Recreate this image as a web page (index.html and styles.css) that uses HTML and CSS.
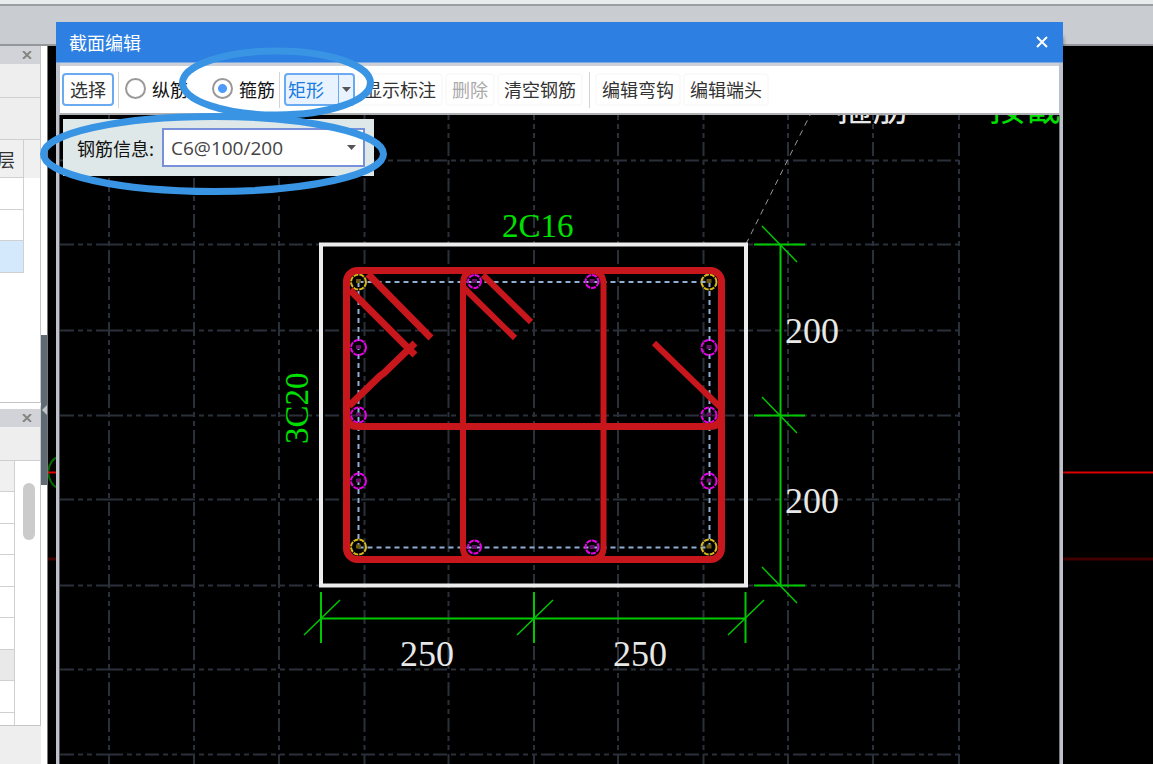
FILE: index.html
```html
<!DOCTYPE html>
<html lang="zh-CN">
<head>
<meta charset="utf-8">
<title>截面编辑</title>
<link rel="stylesheet" href="styles.css">
</head>
<body>
<div class="app">
  <header class="ribbon"></header>
  <div class="workspace">
    <aside class="docks">
      <section class="dock dock-top">
        <div class="dock-title"><button class="dock-close" aria-label="关闭"><svg width="10" height="8" viewBox="0 0 10 8"><path d="M1 0l8 8M9 0L1 8"/></svg></button></div>
        <div class="dock-bar"></div>
        <div class="dock-bar tall"></div>
        <div class="dock-grid-area">
          <table class="grid">
            <tr><th>层</th></tr>
            <tr><td></td></tr>
            <tr><td></td></tr>
            <tr class="selected"><td></td></tr>
          </table>
        </div>
      </section>
      <section class="dock dock-bottom">
        <div class="dock-title"><button class="dock-close" aria-label="关闭"><svg width="10" height="8" viewBox="0 0 10 8"><path d="M1 0l8 8M9 0L1 8"/></svg></button></div>
        <div class="dock-bar"></div>
        <div class="dock-grid-area scrolling">
          <table class="grid narrow">
            <tr><th></th></tr>
            <tr><td></td></tr>
            <tr><td></td></tr>
            <tr><td></td></tr>
            <tr><td></td></tr>
            <tr><td></td></tr>
            <tr class="shaded"><td></td></tr>
            <tr><td></td></tr>
            <tr><td></td></tr>
          </table>
          <div class="thumb"></div>
        </div>
      </section>
    </aside>
    <div class="splitter"><button class="collapse" aria-label="折叠"><svg width="5" height="10" viewBox="0 0 5 10"><path d="M5 0v10L0 5z"/></svg></button></div>
    <svg class="model">
      <g transform="translate(-48 -46)">
        <path d="M58 457C53 458 49 464 48 472C49 480 53 486 58 488" fill="none" stroke="#006a00" stroke-width="2"/>
        <path d="M48 472.5H3000" stroke="#dc0000" stroke-width="2"/>
        <path d="M48 559H3000" stroke="#420000" stroke-width="3"/>
      </g>
    </svg>
  </div>

  <main class="dialog">
    <div class="titlebar">
      <h1 class="title">截面编辑</h1>
      <button class="close" aria-label="关闭"><svg width="12" height="12" viewBox="0 0 12 12"><path d="M1 1l10 10M11 1L1 11"/></svg></button>
    </div>
    <div class="toolbar">
      <button class="tool outlined">选择</button>
      <span class="sep"></span>
      <label class="choice first"><input type="radio" name="bar">纵筋</label>
      <label class="choice"><input type="radio" name="bar" checked>箍筋</label>
      <span class="sep"></span>
      <div class="split">
        <button class="split-main">矩形</button>
        <button class="split-arrow" aria-label="更多形状"><svg width="9" height="5" viewBox="0 0 9 5"><path d="M0 0h9L4.500 5z"/></svg></button>
      </div>
      <button class="tool">显示标注</button>
      <button class="tool" disabled>删除</button>
      <button class="tool">清空钢筋</button>
      <span class="sep wide"></span>
      <button class="tool">编辑弯钩</button>
      <button class="tool">编辑端头</button>
    </div>
    <div class="view">
      <svg class="drawing">
        <g transform="translate(-60 -115)">
          <g class="gridlines">
            <path d="M109 106V3000M194 106V3000M279 106V3000M364.500 106V3000M448.500 106V3000M534 106V3000M618 106V3000M703.500 106V3000M788 106V3000M873 106V3000M959 106V3000"/>
            <path d="M60 160.500H109M60 244.500H109M60 330.500H109M60 415.500H109M60 499.500H109M60 585.500H109M60 669.500H109M60 754.500H109"/>
            <path d="M109 160.500H959M109 244.500H959M109 330.500H959M109 415.500H959M109 499.500H959M109 585.500H959M109 669.500H959M109 754.500H959"/>
          </g>
          <path class="leader" d="M746 244L811 113"/>
          <text class="cad cjk" x="836" y="121">箍筋</text>
          <text class="cad cjk green" x="989" y="121">按截</text>

          <path class="axis" d="M358.500 282H709M358.500 547.500H709M358.500 282V547M709.500 282V547"/>
          <g class="bars corner">
            <circle cx="358.500" cy="282" r="7.500"/><circle cx="709" cy="282" r="7.500"/>
            <circle cx="358.500" cy="547" r="7.500"/><circle cx="709" cy="547" r="7.500"/>
          </g>
          <g class="bars side">
            <circle cx="358.500" cy="347.500" r="7.500"/><circle cx="358.500" cy="415" r="7.500"/><circle cx="358.500" cy="481" r="7.500"/>
            <circle cx="709" cy="347.500" r="7.500"/><circle cx="709" cy="415" r="7.500"/><circle cx="709" cy="481" r="7.500"/>
            <circle cx="474.500" cy="281.500" r="6.500"/><circle cx="592" cy="281.500" r="6.500"/>
            <circle cx="474.500" cy="547" r="6.500"/><circle cx="592" cy="547" r="6.500"/>
          </g>
          <g class="dots">
            <path class="dot-y" d="M356 281h5M706.500 281h5M356 546.500h5M706.500 546.500h5"/>
            <path class="dot-m" d="M356 347h5M356 414.500h5M356 480.500h5M706.500 347h5M706.500 414.500h5M706.500 480.500h5M472 281h5M589.500 281h5M472 547h5M589.500 547h5"/>
          </g>

          <rect class="outline" x="321" y="244.500" width="425" height="341"/>
          <g class="stirrups">
            <rect x="346.500" y="270.500" width="375" height="289" rx="11"/>
            <path d="M346.500 415Q347 426.500 358 426.500H709Q721 426.500 721.500 415"/>
            <path class="tie" d="M474 270.500Q463 272 463 284V548Q463 558 474 559.500M592 270.500Q603.500 272 603.500 284V548Q603.500 558 592 559.500"/>
            <path d="M350 290L415 355M368 274L431 338M349 406L380 376L384 373L415 343"/>
            <path class="tie" d="M464 288L515 338M483 275L531 322M654 343L720 407"/>
          </g>

          <g class="dims">
            <path d="M780.500 244.500V585.500M754 244.500H805M754 415.500H805M754 585.500H805M321 618.500H746M321 592V643M534 592V643M745.500 592V643"/>
            <path class="tick" d="M762 226L797 262M762 397L797 433M762 567L797 603M304 635L340 600M517 635L553 600M728 635L764 600"/>
          </g>
          <text class="cad" x="785" y="343">200</text>
          <text class="cad" x="785" y="513">200</text>
          <text class="cad" x="400" y="666">250</text>
          <text class="cad" x="613" y="666">250</text>
          <text class="cad green mark" x="502" y="237">2C16</text>
          <text class="cad green mark" transform="translate(308 444) rotate(-90)">3C20</text>
        </g>
      </svg>
      <div class="info">
        <label for="bar-info">钢筋信息:</label>
        <div class="combo">
          <select id="bar-info"><option>C6@100/200</option></select>
          <svg width="9" height="5" viewBox="0 0 9 5"><path d="M0 0h9L4.500 5z"/></svg>
        </div>
      </div>
    </div>
  </main>

  <svg class="markup">
    <ellipse cx="276.500" cy="83" rx="94" ry="32"/>
    <ellipse cx="213.500" cy="154" rx="170" ry="37.500"/>
  </svg>
</div>
</body>
</html>
```

FILE: styles.css
```css
* { box-sizing: border-box; }

body {
  margin: 0;
  font: 18px/24px "Noto Sans CJK SC", sans-serif;
  color: #333;
}

button, select, input { font: inherit; color: inherit; margin: 0; }
button { padding: 0; border: 0; background: none; }
svg { display: block; }

.app {
  position: relative;
  display: flex;
  flex-direction: column;
  height: 100vh;
  overflow: hidden;
}

.ribbon {
  flex: none;
  height: 46px;
  background: linear-gradient(#e6eceb 0 4px, #989ea1 4px 6px, #c9ccd1 6px 44px, #94989c 44px);
}

.workspace { flex: 1; display: flex; min-height: 0; background: #000; }

/* docked panels */
.docks { flex: none; width: 41px; display: flex; flex-direction: column; background: #eee; }
.dock { border-right: 1px solid #c6c6c8; border-bottom: 1px solid #c6c6c8; display: flex; flex-direction: column; }
.dock-top { height: 357px; }
.dock-bottom { height: 323px; border-top: 6px solid #fff; }
.dock-title {
  flex: none;
  height: 18px;
  background: #d2d3d8;
  display: flex;
  align-items: center;
  justify-content: flex-end;
  padding-right: 8px;
}
.dock-close svg { fill: none; stroke: #85857f; stroke-width: 2; }
.dock-bar { flex: none; height: 34px; background: #eee; border-bottom: 1px solid #cfcfd1; }
.dock-bar.tall { height: 42px; }
.dock-grid-area {
  flex: 1;
  min-height: 0;
  background: linear-gradient(#f0f0f0 0 38px, #fff 38px);
  display: flex;
  align-items: flex-start;
  overflow: hidden;
}
.dock-grid-area.scrolling { background: #fff; }
.grid { border-collapse: separate; border-spacing: 0; width: 24px; }
.grid.narrow { width: 15px; }
.grid th, .grid td { padding: 0; height: 31px; background: #fff; border-right: 1px solid #d0d0d0; border-bottom: 1px solid #d0d0d0; }
.grid tr:nth-child(even) td { height: 32px; }
.grid th { height: 38px; background: #f0f0f0; font-weight: 400; direction: rtl; padding-right: 9px; max-width: 24px; overflow: hidden; }
.grid.narrow th { height: 31px; padding: 0; }
.grid .selected td { background: #d5e9fc; }
.grid .shaded td { background: #e9e9e9; }
.thumb { width: 12px; height: 57px; margin: 22px 0 0 8px; border-radius: 6px; background: #cbcbcb; }

.splitter {
  flex: none;
  width: 7px;
  background: #fff;
  border-right: 1px solid #777;
  padding-top: 289px;
}
.collapse { width: 6px; height: 150px; background: #5e6a74; display: flex; align-items: center; justify-content: flex-end; }
.collapse svg { fill: #c0c4c8; }
.model { flex: 1; height: 100%; min-width: 0; }

/* dialog window */
.dialog {
  position: absolute;
  top: 22px;
  left: 56px;
  right: 90px;
  bottom: 0;
  display: flex;
  flex-direction: column;
  background: #bcc1cb;
  box-shadow: 3px 12px 4px -3px rgba(0, 0, 0, .5);
}
.titlebar {
  flex: none;
  height: 41px;
  background: #2d7fe2;
  border-bottom: 1px solid #78a8e4;
  color: #fff;
  display: flex;
  align-items: center;
  justify-content: space-between;
  padding: 0 15px 0 13px;
}
.title { margin: 0; font-size: 18px; font-weight: 400; }
.close svg { fill: none; stroke: #fff; stroke-width: 2; }

.toolbar {
  flex: none;
  height: 52px;
  margin: 0 4px;
  padding: 0 2px;
  background: #fff;
  border-top: 3px solid #cdd0d6;
  border-bottom: 2px solid #aeb0b3;
  display: flex;
  align-items: center;
  gap: 2px;
  white-space: nowrap;
}
.tool { height: 33px; padding: 0 5px 2px; border: 2px solid #fafafa; border-radius: 4px; background: #fff; }
.tool.outlined { padding: 0 6px 2px; border-color: #69aaf0; }
.tool:disabled { color: #aaa; }
.sep { width: 1px; height: 36px; margin: 0 2px; background: #d4d4d4; }
.sep.wide { margin: 0 3px 0 4px; }
.choice { display: flex; align-items: center; gap: 6px; color: #111; padding: 0 0 2px 2px; }
.choice.first { margin-right: 20px; }
.choice input {
  appearance: none;
  width: 21px;
  height: 21px;
  border: 2px solid #999;
  border-radius: 50%;
  background: #fff;
}
.choice input:checked { background: radial-gradient(circle, #4c9bfb 0 4px, #fff 5px); }
.split { display: flex; height: 33px; width: 71px; border: 2px solid #69aaf0; border-radius: 4px; background: #e8f3ff; }
.split-main { flex: 1; color: #1a7be0; padding: 0 12px 2px 0; border-right: 1px solid #69aaf0; }
.split-arrow { width: 14px; display: flex; align-items: center; justify-content: center; }
.split-arrow svg, .combo svg { fill: #555; }

/* section drawing */
.view { flex: 1; position: relative; min-height: 0; margin: 0 3px; background: #000; border-left: 1px solid #555; border-right: 1px solid #777; }
.drawing { width: 100%; height: 100%; overflow: hidden; }
.gridlines { fill: none; stroke: #2a303a; stroke-width: 2; stroke-dasharray: 14 4 5 4 5 4; }
.leader { stroke: #999; stroke-width: 1; stroke-dasharray: 6 5; }
.outline { fill: none; stroke: #ededed; stroke-width: 4; }
.axis { fill: none; stroke: #8fb0d4; stroke-width: 2; stroke-dasharray: 5 4; }
.bars { fill: none; stroke-width: 2; stroke-dasharray: 5 1; }
.corner { stroke: #d8b81c; }
.side { stroke: #e800e8; }
.dots { stroke-width: 4; }
.dot-y { stroke: #6a5a10; }
.dot-m { stroke: #66106a; }
.stirrups { fill: none; stroke: #c8161d; stroke-width: 7; }
.tie { stroke-width: 6; }
.dims { fill: none; stroke: #00c800; stroke-width: 2; }
.tick { stroke-width: 1.5; }
.cad { font: 36px "Liberation Serif", serif; fill: #e8e8e8; }
.cad.green { fill: #00e000; }
.cad.mark { font-size: 33px; }
.cad.cjk { font: 36px "Noto Sans CJK SC", sans-serif; }

.info {
  position: absolute;
  top: 4px;
  left: 3px;
  height: 57px;
  padding: 0 9px 0 14px;
  display: flex;
  align-items: center;
  gap: 8px;
  background: #dfe8e8;
  color: #111;
}
.combo { display: flex; align-items: center; width: 203px; height: 39px; border: 2px solid #7890da; background: #fff; color: #444; padding-right: 7px; }
.combo select { appearance: none; flex: 1; min-width: 0; border: 0; background: none; padding: 0 0 0 7px; font: 19px/24px "Open Sans", sans-serif; }

/* highlight rings */
.markup { position: absolute; inset: 0; width: 100%; height: 100%; pointer-events: none; fill: none; stroke: #3995e4; stroke-width: 7; }
```
